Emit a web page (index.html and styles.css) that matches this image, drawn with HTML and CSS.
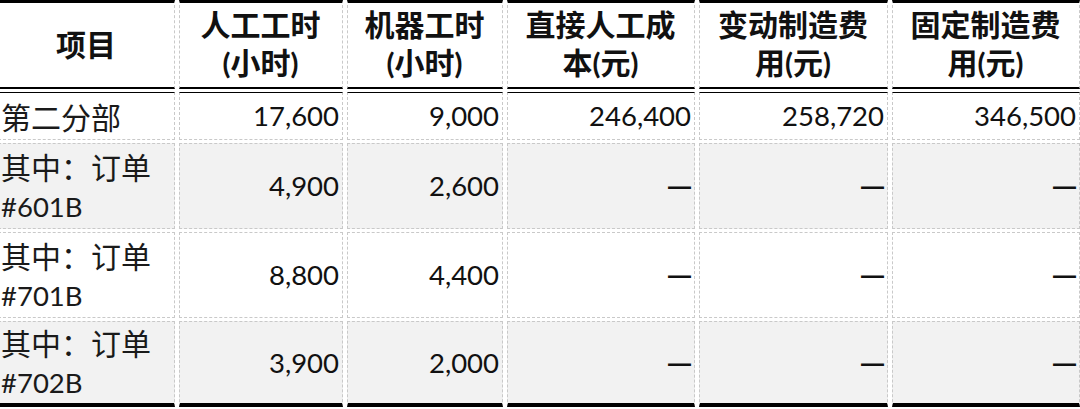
FILE: index.html
```html
<!DOCTYPE html>
<html lang="zh">
<head>
<meta charset="utf-8">
<link rel="stylesheet" href="styles.css">
</head>
<body>
<table class="sheet">
  <thead>
    <tr>
      <th class="c1">项目</th>
      <th class="c2">人工工时<br><span class="lat">(</span>小时<span class="lat">)</span></th>
      <th class="c3">机器工时<br><span class="lat">(</span>小时<span class="lat">)</span></th>
      <th class="c4">直接人工成<br>本<span class="lat">(</span>元<span class="lat">)</span></th>
      <th class="c5">变动制造费<br>用<span class="lat">(</span>元<span class="lat">)</span></th>
      <th class="c6">固定制造费<br>用<span class="lat">(</span>元<span class="lat">)</span></th>
    </tr>
  </thead>
  <tbody>
    <tr class="first">
      <td class="name">第二分部</td>
      <td class="num">17,600</td>
      <td class="num">9,000</td>
      <td class="num">246,400</td>
      <td class="num">258,720</td>
      <td class="num">346,500</td>
    </tr>
    <tr class="alt">
      <td class="name">其中：订单<span class="lat">#601B</span></td>
      <td class="num">4,900</td>
      <td class="num">2,600</td>
      <td class="num"><span class="dash">—</span></td>
      <td class="num"><span class="dash">—</span></td>
      <td class="num"><span class="dash">—</span></td>
    </tr>
    <tr>
      <td class="name">其中：订单<span class="lat">#701B</span></td>
      <td class="num">8,800</td>
      <td class="num">4,400</td>
      <td class="num"><span class="dash">—</span></td>
      <td class="num"><span class="dash">—</span></td>
      <td class="num"><span class="dash">—</span></td>
    </tr>
    <tr class="alt last">
      <td class="name">其中：订单<span class="lat">#702B</span></td>
      <td class="num">3,900</td>
      <td class="num">2,000</td>
      <td class="num"><span class="dash">—</span></td>
      <td class="num"><span class="dash">—</span></td>
      <td class="num"><span class="dash">—</span></td>
    </tr>
  </tbody>
</table>
</body>
</html>
```

FILE: styles.css
```css
html, body {
  margin: 0;
  padding: 0;
  background: #ffffff;
  overflow: hidden;
}

.sheet {
  border-collapse: separate;
  border-spacing: 4px 3px;
  table-layout: fixed;
  width: 1090px;
  margin: -3px 0 0 -6px;
  font-family: "Noto Sans CJK SC", "Noto Sans", sans-serif;
  font-size: 30px;
  color: #1a1a1a;
}

.sheet th,
.sheet td {
  box-sizing: border-box;
  border: 1px dashed #c9c9c9;
  padding: 0 3px 0 2px;
}

.sheet th {
  height: 89px;
  padding-bottom: 5px;
  border-top: 3px solid #000;
  border-bottom: 2px solid #000;
  font-weight: 700;
  line-height: 38px;
  text-align: center;
  vertical-align: middle;
  color: #111;
}

.c1 { width: 177px; }
.c2 { width: 164px; }
.c3 { width: 156px; }
.c4 { width: 188px; }
.c5 { width: 189px; }
.c6 { width: 188px; }

.sheet td {
  line-height: 38px;
  vertical-align: middle;
  font-weight: 400;
}

.first td {
  height: 48px;
  border-top: 1px solid #000;
}

.sheet tbody tr:not(.first) td {
  height: 86px;
}

.sheet tbody tr.last td {
  border-bottom: 4px solid #000;
}

.alt td {
  background: #f2f2f2;
}

.name {
  text-align: left;
}

.num {
  text-align: right;
  font-family: "Lato", "Noto Sans", sans-serif;
  font-size: 27.5px;
  color: #111;
}

.lat {
  font-family: "Lato", "Noto Sans", sans-serif;
  font-size: 27.5px;
}

th .lat {
  font-weight: 700;
  font-size: 29px;
}

.dash {
  font-family: "Liberation Sans", sans-serif;
  font-size: 23px;
  font-weight: 700;
  position: relative;
  top: -1px;
}
```
